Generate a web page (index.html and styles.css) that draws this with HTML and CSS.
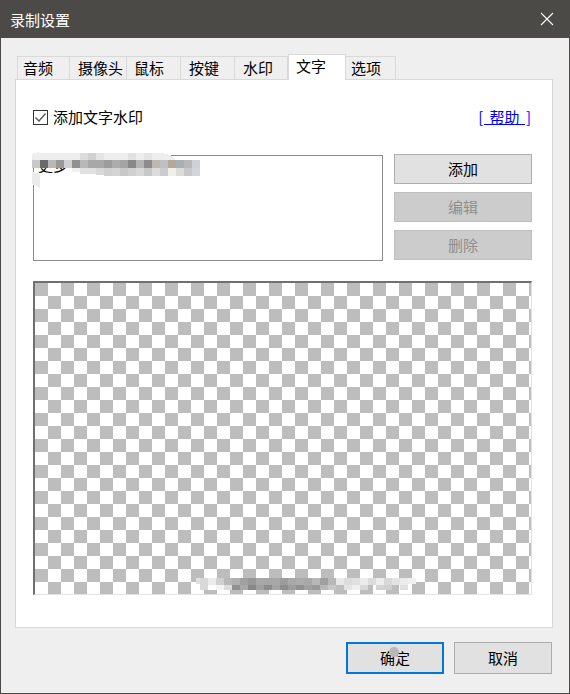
FILE: index.html
```html
<!DOCTYPE html>
<html lang="zh-CN">
<head>
<meta charset="utf-8">
<title>录制设置</title>
<link rel="stylesheet" href="styles.css">
</head>
<body>
<div class="window">
  <header class="titlebar">
    <span class="title">录制设置</span>
    <svg class="close" width="14" height="14" viewBox="0 0 14 14"><path d="M1 1 L13 13 M13 1 L1 13" stroke="#fff" stroke-width="1.1" fill="none"/></svg>
  </header>
  <main class="content">
    <nav class="tabs">
      <span class="tab w53">音频</span>
      <span class="tab w57">摄像头</span>
      <span class="tab w54 tight">鼠标</span>
      <span class="tab w54">按键</span>
      <span class="tab w53">水印</span>
      <span class="tab active">文字</span>
      <span class="tab last">选项</span>
    </nav>
    <section class="panel">
      <div class="toprow">
        <label class="check">
          <span class="box"><svg width="13" height="13" viewBox="0 0 13 13"><path d="M1.5 6.5 L5 10 L11.5 2.5" stroke="#555" stroke-width="1.3" fill="none"/></svg></span>
          <span>添加文字水印</span>
        </label>
        <a class="help" href="#">[ 帮助 ]</a>
      </div>
      <div class="listrow">
        <div class="listbox">
          <span class="item">更多</span>
          <svg class="mosaic-top" width="168" height="36" viewBox="0 0 168 36" shape-rendering="crispEdges">
            <path d="M0 2 L6 0 L8 1 L130 1 L138 3 L143 8 L0 8 Z" fill="#eeeeee"/>
            <rect x="48" y="1" width="8" height="7" fill="#dcdcdc"/><rect x="56" y="1" width="8" height="7" fill="#d2d2d2"/>
            <rect x="64" y="1" width="8" height="7" fill="#e4e4e4"/><rect x="96" y="1" width="8" height="7" fill="#e2e2e2"/>
            <rect x="112" y="1" width="8" height="7" fill="#e4e4e4"/>
            <rect x="0" y="8" width="8" height="8" fill="#c8c8c8"/><rect x="8" y="8" width="8" height="8" fill="#6a6a6a"/>
            <rect x="16" y="8" width="8" height="8" fill="#b8b8b8"/><rect x="24" y="8" width="8" height="8" fill="#989898"/>
            <rect x="32" y="8" width="8" height="8" fill="#d0d0d0"/><rect x="40" y="8" width="8" height="8" fill="#909090"/>
            <rect x="48" y="8" width="8" height="8" fill="#b8b8b8"/><rect x="56" y="8" width="8" height="8" fill="#a8a8a8"/>
            <rect x="64" y="8" width="8" height="8" fill="#a8a8a8"/><rect x="72" y="8" width="8" height="8" fill="#9c9c9c"/>
            <rect x="80" y="8" width="8" height="8" fill="#acacac"/><rect x="88" y="8" width="8" height="8" fill="#a4a4a4"/>
            <rect x="96" y="8" width="8" height="8" fill="#888888"/><rect x="104" y="8" width="8" height="8" fill="#b4b4b4"/>
            <rect x="112" y="8" width="8" height="8" fill="#8c8c8c"/><rect x="120" y="8" width="8" height="8" fill="#bcb8b4"/>
            <rect x="128" y="8" width="8" height="8" fill="#c0c0c4"/><rect x="136" y="8" width="8" height="8" fill="#b4a89c"/>
            <rect x="144" y="8" width="8" height="8" fill="#a8b0b4"/><rect x="152" y="8" width="8" height="8" fill="#b8b8b8"/>
            <rect x="160" y="8" width="8" height="8" fill="#d0d0d8"/>
            <path d="M40 16 H48 V20 H40 Z" fill="#f0f0f0"/>
            <rect x="48" y="16" width="8" height="6" fill="#e0e0e0"/><rect x="56" y="16" width="8" height="6" fill="#e0e0e0"/>
            <rect x="64" y="16" width="8" height="7" fill="#d8d8d8"/><rect x="72" y="16" width="8" height="8" fill="#d0d0d0"/>
            <rect x="80" y="16" width="8" height="8" fill="#d4d4d4"/><rect x="88" y="16" width="8" height="8" fill="#c8c8c8"/>
            <rect x="96" y="16" width="8" height="8" fill="#d0d0d0"/><rect x="104" y="16" width="8" height="8" fill="#d8d8d8"/>
            <rect x="112" y="16" width="8" height="8" fill="#c8c8c8"/><rect x="120" y="16" width="8" height="8" fill="#dcdcdc"/>
            <rect x="128" y="16" width="8" height="8" fill="#cccccc"/><rect x="136" y="16" width="8" height="8" fill="#f4eee8"/>
            <rect x="144" y="16" width="8" height="8" fill="#dcdcdc"/><rect x="152" y="16" width="8" height="8" fill="#c8c8c8"/>
            <rect x="160" y="16" width="8" height="8" fill="#d4d4dc"/>
            <path d="M0 20 L8 22 V36 L0 32 Z" fill="#ebebeb"/>
          </svg>
        </div>
        <div class="side">
          <button class="btn" type="button">添加</button>
          <button class="btn off" type="button">编辑</button>
          <button class="btn off" type="button">删除</button>
        </div>
      </div>
      <div class="preview">
        <svg class="mosaic-bottom" width="224" height="16" viewBox="0 0 224 16" shape-rendering="crispEdges">
          <rect x="0" y="0" width="4" height="6" fill="#e0e0e0"/>
          <rect x="4" y="0" width="8" height="12" fill="#d8d8d8"/><rect x="12" y="0" width="8" height="7" fill="#ececec"/>
          <rect x="20" y="0" width="8" height="7" fill="#d0d0d0"/><rect x="28" y="0" width="8" height="7" fill="#b8b8b8"/>
          <rect x="36" y="0" width="8" height="7" fill="#b0b0b0"/><rect x="44" y="0" width="8" height="7" fill="#a0a0a0"/>
          <rect x="52" y="0" width="8" height="7" fill="#989898"/><rect x="60" y="0" width="8" height="7" fill="#a8a8a8"/>
          <rect x="68" y="0" width="8" height="7" fill="#a6a6a6"/><rect x="76" y="0" width="8" height="7" fill="#a8a8a8"/>
          <rect x="84" y="0" width="8" height="7" fill="#9c9c9c"/><rect x="92" y="0" width="8" height="7" fill="#a8a8a8"/>
          <rect x="100" y="0" width="8" height="7" fill="#acacac"/><rect x="108" y="0" width="8" height="7" fill="#a8a8a8"/>
          <rect x="116" y="0" width="8" height="7" fill="#b8b8b8"/><rect x="124" y="0" width="8" height="7" fill="#a0a0a0"/>
          <rect x="132" y="0" width="8" height="7" fill="#b8b8b8"/><rect x="140" y="0" width="8" height="7" fill="#e8e8e8"/>
          <rect x="148" y="0" width="8" height="7" fill="#dcdcdc"/><rect x="156" y="0" width="8" height="7" fill="#e0e0e0"/>
          <rect x="164" y="0" width="8" height="7" fill="#ececec"/><rect x="172" y="0" width="8" height="7" fill="#dcdcdc"/>
          <rect x="180" y="0" width="8" height="7" fill="#eeeeee"/><rect x="188" y="0" width="8" height="7" fill="#d8d8d8"/>
          <rect x="196" y="0" width="8" height="7" fill="#e4e4e4"/><rect x="204" y="0" width="8" height="7" fill="#ececec"/>
          <rect x="212" y="0" width="8" height="6" fill="#f0f0f0"/>
          <rect x="12" y="7" width="8" height="5" fill="#ffffff"/><rect x="20" y="7" width="8" height="5" fill="#f4f4f4"/>
          <rect x="28" y="7" width="8" height="5" fill="#dcdcdc"/><rect x="36" y="7" width="8" height="5" fill="#909090"/>
          <rect x="44" y="7" width="8" height="5" fill="#a8a8a8"/><rect x="52" y="7" width="8" height="5" fill="#888888"/>
          <rect x="60" y="7" width="8" height="5" fill="#a0a0a0"/><rect x="68" y="7" width="8" height="5" fill="#8c8c8c"/>
          <rect x="76" y="7" width="8" height="5" fill="#a4a4a4"/><rect x="84" y="7" width="8" height="5" fill="#8c8c8c"/>
          <rect x="92" y="7" width="8" height="5" fill="#9c9c9c"/><rect x="100" y="7" width="8" height="5" fill="#909090"/>
          <rect x="108" y="7" width="8" height="5" fill="#a0a0a0"/><rect x="116" y="7" width="8" height="5" fill="#989898"/>
          <rect x="124" y="7" width="8" height="5" fill="#b8b8b8"/><rect x="132" y="7" width="8" height="5" fill="#c8c8c8"/>
          <rect x="148" y="7" width="8" height="5" fill="#e4e4e4"/><rect x="156" y="7" width="8" height="5" fill="#f0f0f0"/>
          <rect x="164" y="7" width="8" height="5" fill="#d8d8d8"/><rect x="180" y="7" width="8" height="5" fill="#d4d4d4"/>
          <rect x="188" y="7" width="8" height="5" fill="#d0d0d0"/><rect x="204" y="7" width="8" height="5" fill="#e0e0e0"/>
        </svg>
      </div>
    </section>
    <footer class="footer">
      <button class="btn wide default" type="button">确定<span class="dot"></span></button>
      <button class="btn wide" type="button">取消</button>
    </footer>
  </main>
</div>
</body>
</html>
```
FILE: styles.css
```css
* { box-sizing: border-box; }
html, body { margin: 0; padding: 0; }
body {
  width: 570px;
  height: 694px;
  overflow: hidden;
  font-family: "Noto Sans CJK SC", "Liberation Sans", sans-serif;
  font-size: 15px;
  color: #000;
}
.window {
  width: 570px;
  height: 694px;
  display: flex;
  flex-direction: column;
  background: #efefef;
  border: 1px solid #4c4a48;
  border-top: 0;
}
.titlebar {
  height: 38px;
  margin: 0 -1px;
  padding: 0 16px 0 10px;
  flex: none;
  display: flex;
  align-items: center;
  justify-content: space-between;
  background: #4c4a47;
  color: #fff;
  line-height: 1;
}
.close { display: block; }
.content {
  flex: 1;
  display: flex;
  flex-direction: column;
  padding: 16px 17px 19px 14px;
}
.tabs {
  display: flex;
  align-items: flex-end;
  height: 26px;
  margin: 0 0 -1px 2px;
  position: relative;
  z-index: 1;
}
.tab {
  height: 24px;
  line-height: 22px;
  padding-left: 8px;
  border: 1px solid #d9d9d9;
  border-left: 0;
  border-bottom: 0;
  white-space: nowrap;
}
.tab:first-child { border-left: 1px solid #d9d9d9; padding-left: 5px; }
.tab.tight { padding-left: 7px; }
.w53 { width: 53px; }
.w54 { width: 54px; }
.w57 { width: 57px; }
.tab.active {
  width: 58px;
  height: 26px;
  padding-left: 7px;
  background: #fff;
  border-left: 1px solid #d9d9d9;
  line-height: 21px;
}
.tab.last { width: 50px; padding-left: 5px; }
.panel {
  width: 538px;
  height: 549px;
  flex: none;
  padding: 29px 20px 0 17px;
  background: #fff;
  border: 1px solid #d9d9d9;
}
.toprow {
  display: flex;
  justify-content: space-between;
  align-items: center;
  height: 16px;
}
.check { display: flex; align-items: center; gap: 5px; line-height: 16px; }
.box {
  width: 15px;
  height: 15px;
  display: flex;
  align-items: center;
  justify-content: center;
  border: 1px solid #333;
  background: #fff;
}
.help {
  color: #0000ff;
  text-decoration: underline;
  line-height: 16px;
  white-space: pre;
  word-spacing: 3px;
  margin-right: 1px;
}
.listrow {
  display: flex;
  justify-content: space-between;
  margin-top: 29px;
}
.listbox {
  position: relative;
  width: 350px;
  height: 106px;
  margin-top: 1px;
  padding: 0 4px;
  border: 1px solid #8a8a90;
  line-height: 18px;
}
.item { display: block; }
.mosaic-top { position: absolute; left: -2px; top: -4px; display: block; }
.side { width: 138px; display: flex; flex-direction: column; gap: 8px; }
.btn {
  width: 100%;
  height: 30px;
  padding: 0;
  font: inherit;
  color: #000;
  background: #e1e1e1;
  border: 1px solid #adadad;
  line-height: 28px;
}
.btn.off { color: #8f8f8f; background: #cccccc; border-color: #bfbfbf; }
.preview {
  position: relative;
  width: 499px;
  height: 314px;
  margin-top: 20px;
  border-style: solid;
  border-width: 2px 1px 1px 2px;
  border-color: #707070 #e3e3e3 #e3e3e3 #707070;
  background-color: #fff;
  background-image: repeating-conic-gradient(#fff 0 25%, #bdbdbd 0 50%);
  background-size: 26px 26px;
  background-position: 0 0;
  background-origin: padding-box;
  background-clip: padding-box;
}
.mosaic-bottom { position: absolute; left: 161px; top: 295px; display: block; }
.footer {
  display: flex;
  justify-content: flex-end;
  gap: 10px;
  margin-top: 14px;
}
.btn.wide { width: 98px; height: 32px; line-height: 30px; position: relative; }
.btn.default { border: 2px solid #0078d7; line-height: 28px; }
.dot {
  position: absolute;
  left: 41px;
  top: 3px;
  width: 10px;
  height: 10px;
  border-radius: 50%;
  background: #b8b8b8;
}
```
